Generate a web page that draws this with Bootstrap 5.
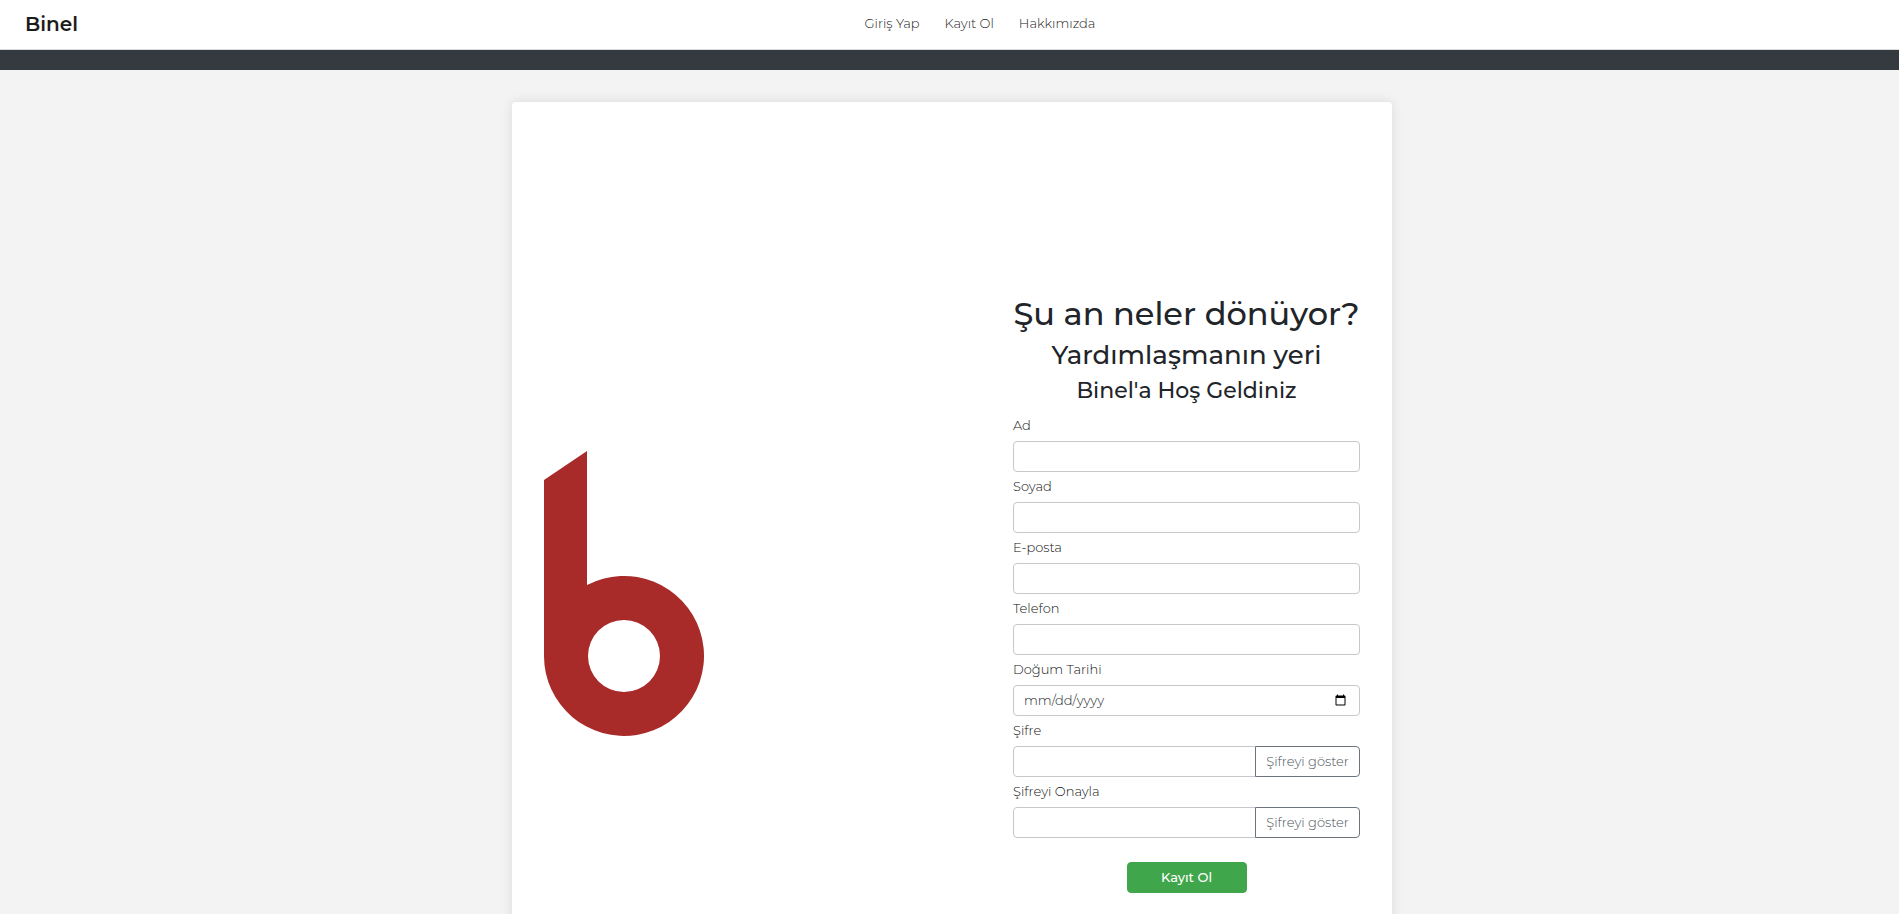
<!DOCTYPE html>
<html lang="tr">
<head>
<meta charset="utf-8">
<meta name="viewport" content="width=device-width, initial-scale=1">
<title>Binel</title>
<link href="https://cdn.jsdelivr.net/npm/bootstrap@5.3.0/dist/css/bootstrap.min.css" rel="stylesheet">
<style>
  body { font-family: Montserrat, Inter, sans-serif; font-size: 13px; font-weight: 300; background: #f3f3f3; color: #212529; }
  .site-nav { height: 50px; padding: 0 25px 2px; border-bottom: 1px solid #d9dadb; }
  .navbar-brand { font-size: 20px; font-weight: 600; color: #1b1b1b; }
  .site-nav .site-links { gap: 25px; }
  .site-nav .site-links .nav-link { padding: 0; color: #222; }
  .strip { height: 20px; background: #343a40; }
  .signup-wrap { padding: 32px 12px 32px 17px; }
  .signup { max-width: 880px; padding: 190px 32px 192px; border: 0; border-radius: 4px; box-shadow: 0 0 12px rgba(0, 0, 0, .1); }
  .logo { width: 160px; height: 287px; }
  .signup-form { width: 347px; }
  .signup-form h1, .signup-form h2, .signup-form h3 { font-weight: 500; margin: 0; text-align: center; white-space: nowrap; }
  .signup-form h1 { font-size: 32px; line-height: 44px; }
  .signup-form h2 { font-size: 26px; line-height: 38px; }
  .signup-form h3 { font-size: 22px; line-height: 34px; margin-bottom: 3px; }
  .form-label { display: block; line-height: 28px; margin-bottom: 2px; color: #111; }
  .form-control, .signup-form .btn { height: 31px; padding: 3px 10px; font-size: 13px; line-height: 23px; border-radius: 4px; }
  .form-control { border-color: #c8c8cc; font-weight: 300; color: #212529; }
  .signup-form .btn-outline-secondary { font-weight: 300; color: #495057; }
  .signup-form .btn-success { width: 120px; margin-top: 24px; font-weight: 500; background: #40a64b; border-color: #40a64b; }
</style>
</head>
<body>
<nav class="site-nav navbar navbar-expand bg-white flex-nowrap">
  <a class="navbar-brand p-0 me-2" href="#">Binel</a>
  <div class="site-links navbar-nav flex-grow-1 justify-content-center">
    <a class="nav-link" href="#">Giriş Yap</a>
    <a class="nav-link" href="#">Kayıt Ol</a>
    <a class="nav-link" href="#">Hakkımızda</a>
  </div>
</nav>
<div class="strip"></div>
<main class="signup-wrap">
  <section class="signup card mx-auto">
    <div class="d-flex flex-wrap align-items-center justify-content-between gap-4">
      <svg class="logo" viewBox="0 -2 160 287" role="img" aria-label="Binel">
        <path fill="#a82b29" fill-rule="evenodd" d="M0 29 43 0V134A80 80 0 1 1 0 205ZM80 169a36 36 0 1 0 0 72a36 36 0 1 0 0-72Z"/>
      </svg>
      <form class="signup-form">
        <h1>Şu an neler dönüyor?</h1>
        <h2>Yardımlaşmanın yeri</h2>
        <h3>Binel'a Hoş Geldiniz</h3>
        <label class="form-label" for="ad">Ad</label>
        <input class="form-control" type="text" id="ad">
        <label class="form-label" for="soyad">Soyad</label>
        <input class="form-control" type="text" id="soyad">
        <label class="form-label" for="eposta">E-posta</label>
        <input class="form-control" type="email" id="eposta">
        <label class="form-label" for="telefon">Telefon</label>
        <input class="form-control" type="tel" id="telefon">
        <label class="form-label" for="dogum">Doğum Tarihi</label>
        <input class="form-control" type="date" id="dogum">
        <label class="form-label" for="sifre">Şifre</label>
        <div class="input-group">
          <input class="form-control" type="password" id="sifre">
          <button class="btn btn-outline-secondary" type="button">Şifreyi göster</button>
        </div>
        <label class="form-label" for="onay">Şifreyi Onayla</label>
        <div class="input-group">
          <input class="form-control" type="password" id="onay">
          <button class="btn btn-outline-secondary" type="button">Şifreyi göster</button>
        </div>
        <button class="btn btn-success d-block mx-auto" type="submit">Kayıt Ol</button>
      </form>
    </div>
  </section>
</main>
<script src="https://cdn.jsdelivr.net/npm/bootstrap@5.3.0/dist/js/bootstrap.bundle.min.js"></script>
</body>
</html>
